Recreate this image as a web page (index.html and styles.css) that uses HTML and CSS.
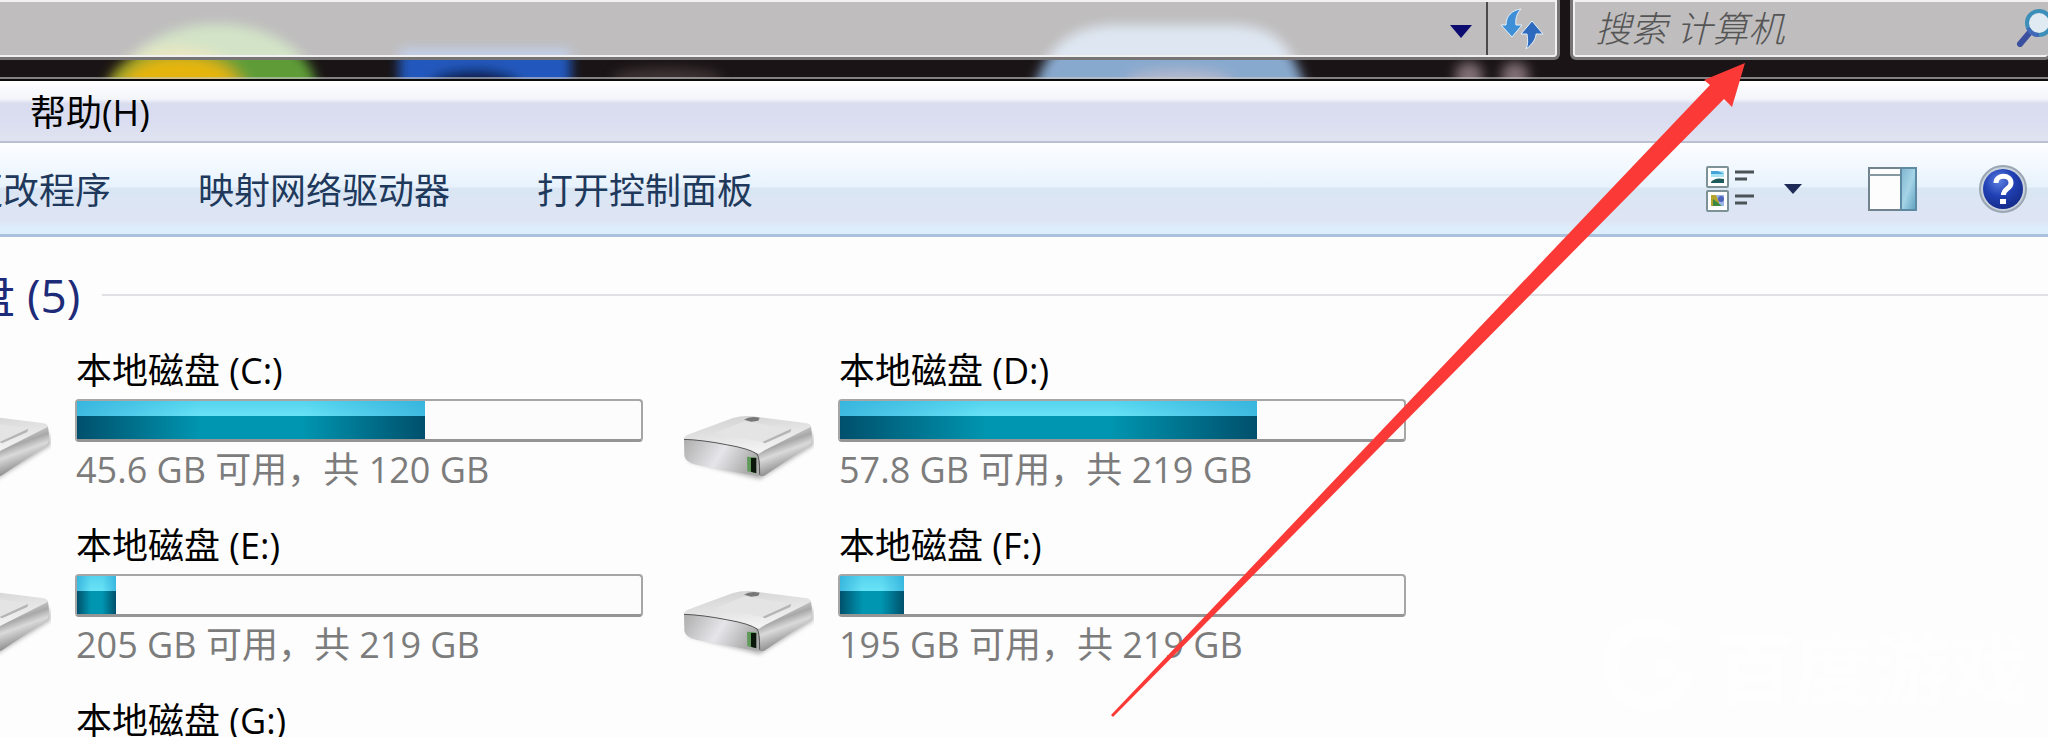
FILE: index.html
```html
<!DOCTYPE html>
<html lang="zh-CN">
<head>
<meta charset="utf-8">
<title>计算机</title>
<link rel="stylesheet" href="styles.css">
</head>
<body>
<svg class="defs" aria-hidden="true">
  <defs>
    <linearGradient id="front" x1="0" y1="0" x2="1" y2="0.3"><stop offset="0" stop-color="#adadad"/><stop offset="0.55" stop-color="#e6e6ea"/><stop offset="1" stop-color="#acacac"/></linearGradient>
    <linearGradient id="top" x1="0" y1="0" x2="0.4" y2="1"><stop offset="0" stop-color="#cfcfcf"/><stop offset="1" stop-color="#f3f3f3"/></linearGradient>
    <linearGradient id="side" x1="0.3" y1="0" x2="0.7" y2="1"><stop offset="0" stop-color="#f2f2f2"/><stop offset="0.35" stop-color="#a8a8a8"/><stop offset="0.5" stop-color="#dadada"/><stop offset="1" stop-color="#5e5e5e"/></linearGradient>
    <filter id="shade" x="-20%" y="-20%" width="140%" height="150%"><feGaussianBlur stdDeviation="7"/></filter>
    <filter id="glow" x="-20%" y="-40%" width="140%" height="180%"><feGaussianBlur stdDeviation="6"/></filter>
    <symbol id="drive" viewBox="0 0 393 210">
      <path d="M12 140 L230 196 L392 94 L388 60 L200 60Z" fill="#777" opacity=".55" filter="url(#shade)"/>
      <path d="M3 75 Q4 66 14 62 L150 12 Q180 3 210 7 L372 28 Q386 32 384 42 L250 118 L232 120Z" fill="url(#top)"/>
      <path d="M96 58 L185 22 L325 44 L238 84 Z" fill="#e4e4e4"/>
      <path d="M238 84 L325 44 L322 54 L246 88Z" fill="#b5b5b5"/>
      <path d="M183 17 Q200 5 230 11 L226 20 L205 23Z" fill="#777"/>
      <path d="M384 38 Q390 72 384 88 Q378 98 360 107 L246 184 Q236 190 226 182 L222 126 Q232 116 246 108Z" fill="url(#side)"/>
      <path d="M3 76 Q60 78 130 92 Q200 104 222 120 Q232 130 230 182 Q228 189 210 184 L40 152 Q8 146 4 126Z" fill="url(#front)"/>
      <path d="M3 76 Q60 78 130 92 Q200 104 222 120 Q230 128 230 182" fill="none" stroke="#555" stroke-width="3"/>
      <path d="M192 128 L218 130 L219 178 L193 172Z" fill="#5f9a5a"/>
      <path d="M204 132 L220 132 L220 178 L204 173Z" fill="#0c170c"/>
    </symbol>
  </defs>
</svg>
<div class="window">
  <header class="chrome">
    <svg class="desktop" width="1700" height="81" aria-hidden="true">
      <g filter="url(#glow)">
        <ellipse cx="250" cy="92" rx="100" ry="68" fill="#5e9c38"/>
        <ellipse cx="210" cy="96" rx="72" ry="50" fill="#a4a626"/>
        <ellipse cx="213" cy="92" rx="58" ry="34" fill="#e6b508"/>
      </g>
      <g filter="url(#glow)">
        <rect x="432" y="49" width="172" height="50" rx="6" fill="#2458bd"/>
        <ellipse cx="508" cy="86" rx="46" ry="16" fill="#10183c"/>
      </g>
      <g filter="url(#glow)">
        <path d="M1064 100 C1078 40 1110 25 1150 25 H1260 C1310 25 1326 44 1342 100Z" fill="#88a9ce"/>
        <ellipse cx="1212" cy="82" rx="52" ry="12" fill="#b3b9cc"/>
      </g>
      <g filter="url(#glow)" opacity=".6">
        <ellipse cx="1502" cy="76" rx="14" ry="14" fill="#c4abb2"/>
        <ellipse cx="1548" cy="76" rx="14" ry="14" fill="#c4abb2"/>
        <ellipse cx="700" cy="78" rx="55" ry="10" fill="#58484a"/>
      </g>
    </svg>
    <div class="address">
      <button class="drop" aria-label="历史记录"><svg width="22" height="13" viewBox="0 0 22 13"><path d="M0 0H22L11 13Z" fill="#0b0b70"/></svg></button>
      <button class="refresh" aria-label="刷新"><svg width="44" height="42" viewBox="0 0 44 42">
        <path d="M21 1C12 2 6 8 6 17H1L12 29L22 17H16C15 11 17 5 21 1Z" fill="#3f8fd6" stroke="#e4f1fb"/>
        <path d="M26 41C33 36 36 30 36 26H43L32 13L21 26H27C28 32 28 37 26 41Z" fill="#2d69bd" stroke="#e4f1fb"/>
      </svg></button>
    </div>
    <form class="search">
      <input type="text" placeholder="搜索 计算机" aria-label="搜索 计算机">
      <button type="button" aria-label="搜索"><svg width="40" height="40" viewBox="0 0 40 40">
        <path d="M15 24L4 37" stroke="#3b4f9f" stroke-width="6" stroke-linecap="round"/>
        <circle cx="23" cy="16" r="12" fill="#dfeaf2" stroke="#3c8fb8" stroke-width="4"/>
        <path d="M12 21A12 12 0 0 0 23 28" fill="none" stroke="#4468b8" stroke-width="4"/>
      </svg></button>
    </form>
  </header>
  <nav class="menu"><button>帮助(H)</button></nav>
  <div class="toolbar">
    <button>更改程序</button>
    <button>映射网络驱动器</button>
    <button>打开控制面板</button>
    <div class="tools">
      <button class="views" aria-label="更改视图">
        <svg width="49" height="46" viewBox="0 0 49 46">
          <rect x="1" y="1" width="21" height="20" rx="1" fill="#fff" stroke="#7d9296" stroke-width="2"/>
          <path d="M5 5H18V11H5Z" fill="#a8e3f3"/><path d="M5 5H12L18 8H5Z" fill="#43a5d8"/><path d="M5 16Q9 11 18 13V17H5Z" fill="#1d5a5c"/>
          <rect x="1" y="25" width="21" height="20" rx="1" fill="#fff" stroke="#7d9296" stroke-width="2"/>
          <path d="M5 29H18V40H5Z" fill="#9bb5e8"/><path d="M5 29H10L13 36V40H5Z" fill="#b5a52f"/><path d="M7 33L16 40H7Z" fill="#3d8842"/><circle cx="15" cy="33" r="3" fill="#5165bb"/>
          <path d="M29 6H48M29 13H41M29 30H48M29 37H41" stroke="#4b5357" stroke-width="3"/>
        </svg>
      </button>
      <button class="more" aria-label="更多选项"><svg width="18" height="10" viewBox="0 0 18 10"><path d="M0 0H18L9 10Z" fill="#1c2a55"/></svg></button>
      <button class="pane" aria-label="显示预览窗格">
        <svg width="49" height="44" viewBox="0 0 49 44">
          <defs><linearGradient id="pn" x1="0" y1="0" x2="1" y2="1"><stop offset="0" stop-color="#7fb4cf"/><stop offset=".5" stop-color="#a5d4e6"/><stop offset="1" stop-color="#5d9fc0"/></linearGradient></defs>
          <rect x="1" y="1" width="47" height="42" fill="#fdfdfd" stroke="#71838c" stroke-width="2"/>
          <path d="M1 8H32" stroke="#8797a0" stroke-width="2"/>
          <rect x="33" y="1" width="15" height="42" fill="url(#pn)" stroke="#5e8ba3" stroke-width="2"/>
        </svg>
      </button>
      <button class="help" aria-label="获取帮助">
        <svg width="48" height="48" viewBox="0 0 48 48">
          <defs><radialGradient id="hp" cx=".4" cy=".3" r=".75"><stop offset="0" stop-color="#5c7fe0"/><stop offset=".5" stop-color="#2140b4"/><stop offset="1" stop-color="#132a86"/></radialGradient></defs>
          <circle cx="24" cy="24" r="23" fill="#c9d2dc" stroke="#9aa6b2" stroke-width="2"/>
          <circle cx="24" cy="24" r="20" fill="url(#hp)"/>
          <path d="M17 18C17 9 32 9 32 18C32 24 24.500 23 24.500 30" fill="none" stroke="#fff" stroke-width="5"/>
          <rect x="21" y="34" width="6" height="5" fill="#fff"/>
        </svg>
      </button>
    </div>
  </div>
  <main class="content">
    <h2>盘 (5)</h2>
    <ul class="drives">
      <li><svg class="icon"><use href="#drive"/></svg><div class="info"><span class="name">本地磁盘 (C:)</span><div class="bar"><div class="fill" style="width:61.700%"></div></div><span class="free">45.6 GB 可用，共 120 GB</span></div></li>
      <li><svg class="icon"><use href="#drive"/></svg><div class="info"><span class="name">本地磁盘 (D:)</span><div class="bar"><div class="fill" style="width:74%"></div></div><span class="free">57.8 GB 可用，共 219 GB</span></div></li>
      <li><svg class="icon"><use href="#drive"/></svg><div class="info"><span class="name">本地磁盘 (E:)</span><div class="bar"><div class="fill" style="width:7%"></div></div><span class="free">205 GB 可用，共 219 GB</span></div></li>
      <li><svg class="icon"><use href="#drive"/></svg><div class="info"><span class="name">本地磁盘 (F:)</span><div class="bar"><div class="fill" style="width:11.400%"></div></div><span class="free">195 GB 可用，共 219 GB</span></div></li>
      <li><svg class="icon"></svg><div class="info"><span class="name">本地磁盘 (G:)</span></div></li>
    </ul>
  </main>
</div>
<div class="watermark">
  <svg width="92" height="96" viewBox="0 0 92 96" fill="none" stroke="#fefefe"><path d="M72 18A38 38 0 1 0 82 50" stroke-width="16"/><circle cx="62" cy="46" r="10" fill="#fefefe"/><circle cx="14" cy="14" r="8" fill="#fefefe"/></svg>
  <span>百度游戏</span>
</div>
<svg class="arrow" width="636" height="656" viewBox="0 0 636 656" aria-hidden="true"><path d="M635 1L594 18L600 23L1 653L3 655L614 37L622 45Z" fill="#fb3a37"/></svg>
</body>
</html>
```
FILE: styles.css
```css
* { box-sizing: border-box; }

body {
  position: relative;
  margin: 0;
  height: 100vh;
  overflow: hidden;
  background: #fdfdfd;
  font-family: "Open Sans", "Noto Sans CJK SC", sans-serif;
  font-size: 36px;
  font-weight: 400;
  line-height: 44px;
  color: #000;
}

button, input {
  font: inherit;
  color: inherit;
  background: none;
  border: 0;
  padding: 0;
  margin: 0;
}

button { white-space: nowrap; }
svg { display: block; }

.defs { position: absolute; width: 0; height: 0; }

/* The view is scrolled slightly to the right */
.window { margin-left: -33px; }

.chrome {
  position: relative;
  display: flex;
  gap: 13px;
  height: 81px;
  padding-bottom: 21px;
  background: #1a1416;
  border-bottom: 2px solid #0d0a0b;
  overflow: hidden;
}

.chrome::after {
  content: "";
  position: absolute;
  inset: auto 0 0 0;
  height: 2px;
  background: rgba(200, 200, 200, .6);
}

.desktop { position: absolute; left: 0; top: 0; }

.address, .search {
  position: relative;
  display: flex;
  align-items: stretch;
  background: rgba(255, 255, 255, .72);
  border: 2px solid #f1f1f1;
  border-radius: 0 0 3px 3px;
  box-shadow: 0 0 0 3px #777475;
  margin-bottom: 1px;
}

.address { flex: 1; justify-content: flex-end; }
.drop { width: 48px; padding: 6px 0 0 12px; }
.refresh { width: 69px; border-left: 2px solid #4d4a4b; padding-left: 12px; }

.search { width: 475px; padding-left: 20px; border-right: 0; margin-left: 3px; }
.search input {
  flex: 1;
  min-width: 0;
  font-style: italic;
  font-weight: 300;
}
.search input::placeholder { color: #555; opacity: 1; }
.search button { width: 32px; overflow: hidden; padding-bottom: 4px; }

.menu {
  display: flex;
  align-items: center;
  height: 62px;
  padding: 4px 0 0 63px;
  background: linear-gradient(#fff, #f3f5fa 30%, #d9dcee 38%, #dadef0 70%, #e0e3f0);
  border-bottom: 2px solid #b9c0d2;
}

.toolbar {
  display: flex;
  align-items: center;
  gap: 87px;
  height: 94px;
  padding-right: 21px;
  color: #1e395b;
  background: linear-gradient(#fdfeff, #f0f7fe 30%, #e7f2fc 48%, #dae6f3 50%, #dee4f4 84%, #dceefc 94%);
  border-bottom: 3px solid #abc0dc;
}

.toolbar > button { padding-top: 4px; }
.tools { display: flex; align-items: center; margin-left: auto; }
.more { margin: 0 66px 0 29px; }
.help { margin-left: 62px; }

.content { padding-top: 28px; }

h2 {
  display: flex;
  align-items: center;
  gap: 22px;
  margin: 0 0 24px;
  padding-left: 2px;
  font-size: 46px;
  font-weight: 400;
  line-height: 60px;
  color: #1d2b78;
}
h2::after { content: ""; flex: 1; height: 2px; background: #dfe1e4; }

.drives {
  display: grid;
  grid-template-columns: repeat(auto-fill, 723px);
  gap: 32px 40px;
  max-width: 1500px;
  margin: 0 0 0 -47px;
  padding: 0;
  list-style: none;
}

.drives li { display: flex; gap: 24px; }
.icon { flex: none; width: 131px; height: 70px; align-self: flex-end; margin-bottom: 8px; }
.info { flex: 1; display: flex; flex-direction: column; gap: 6px; }

.bar {
  height: 43px;
  border: 2px solid #a6a6a6;
  border-bottom: 3px solid #959595;
  border-radius: 4px;
  background: #fcfcfc;
}

.fill {
  height: 100%;
  background:
    linear-gradient(90deg, rgba(35, 160, 210, .6), transparent 35%, transparent 65%, rgba(35, 160, 210, .6)) 0 0 / 100% 15px no-repeat,
    linear-gradient(#56d4ee, #68e2f6) 0 0 / 100% 15px no-repeat,
    linear-gradient(90deg, #00506c, #0095b0 35%, #0095b0 65%, #00506c);
}

.name, .free { padding-left: 1px; }
.free { color: #7c7c7c; }

.watermark {
  position: absolute;
  right: 20px;
  bottom: 20px;
  display: flex;
  align-items: center;
  gap: 20px;
  color: #fefefe;
  font-size: 78px;
  font-weight: 700;
  line-height: 96px;
}

.arrow { position: absolute; top: 62px; right: 302px; }
```
